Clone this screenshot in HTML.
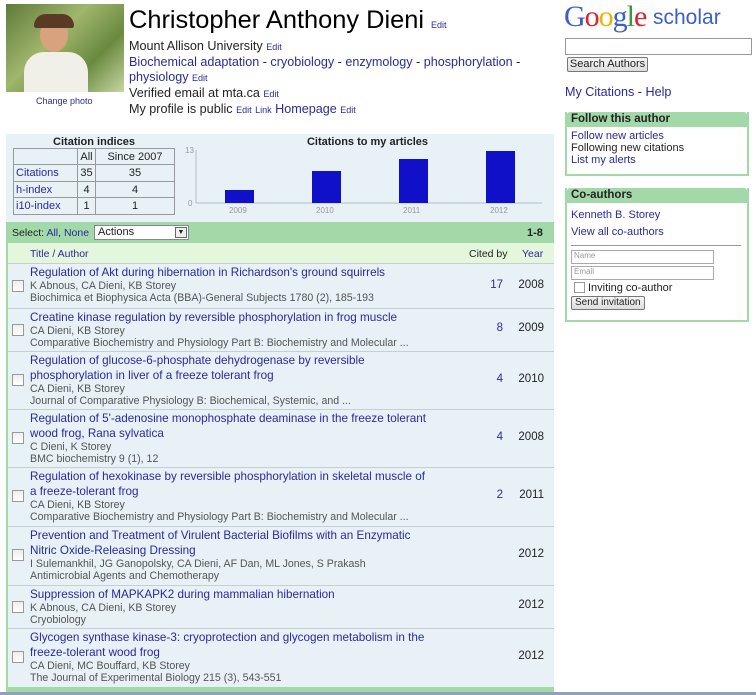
<!DOCTYPE html>
<html><head><meta charset="utf-8"><style>
*{margin:0;padding:0;box-sizing:border-box}
body{width:756px;height:695px;overflow:hidden;background:#fff;font-family:"Liberation Sans",Arial,sans-serif;font-size:12.6px;color:#222;position:relative}
a{color:#2a2a9f;text-decoration:none}
.abs{position:absolute}
.e{font-size:9px;color:#2a2a9f}
.row{position:absolute;left:8px;width:546px;border-top:1px solid #c8cfd4}
.row .cb{position:absolute;left:4px;width:12px;height:12px;border:1px solid #999;background:linear-gradient(#eee,#fff)}
.row .t{position:absolute;left:22px;top:1px;width:430px;font-size:11.7px;line-height:15px;color:#2a2a9f}
.row .s{font-size:10.6px;color:#555;line-height:12px}
.row .c{position:absolute;right:51px;color:#2a2a9f;font-size:11.5px}
.row .y{position:absolute;right:10px;font-size:11.5px}
.box{position:absolute;left:565px;width:184px;border:2px solid #a3d9a8;border-top:none;background:#fff}
.box .h{background:#a3d9a8;font-weight:bold;font-size:11.5px;padding:1px 4px;height:15px;border-radius:3px 3px 0 0}
</style></head><body>
<div class="abs" style="left:6px;top:4px;width:118px;height:88px;background:linear-gradient(135deg,#5f7a3a,#9fb66c 40%,#6a8a3f 70%,#c7d6a3);overflow:hidden">
<div class="abs" style="left:34px;top:14px;width:28px;height:34px;border-radius:50%;background:#d9a27e"></div>
<div class="abs" style="left:28px;top:10px;width:40px;height:14px;border-radius:20px 20px 4px 4px;background:#5a3a25"></div>
<div class="abs" style="left:18px;top:48px;width:64px;height:45px;border-radius:20px 20px 0 0;background:#f0efe8"></div>
</div>
<div class="abs" style="left:36px;top:96px;font-size:9px;color:#2a2a9f">Change photo</div>
<div class="abs" style="left:129px;top:6px;font-size:25.4px;color:#000">Christopher Anthony Dieni <span class="e">Edit</span></div>
<div class="abs" style="left:129px;top:39px;line-height:15px;width:420px">Mount Allison University <span class="e">Edit</span><br>
<a>Biochemical adaptation</a> - <a>cryobiology</a> - <a>enzymology</a> - <a>phosphorylation</a> -<br><a>physiology</a> <span class="e">Edit</span><br>
Verified email at mta.ca <span class="e">Edit</span><br>
My profile is public <span class="e">Edit</span> <span class="e">Link</span> <a>Homepage</a> <span class="e">Edit</span></div>

<div class="abs" style="left:6px;top:134px;width:548px;height:561px;background:#e7f1f6"></div>
<div class="abs" style="left:6px;top:222px;width:2px;height:473px;background:#a3d9a8"></div>
<div class="abs" style="left:13px;top:136px;width:162px;text-align:center;font-weight:bold;font-size:11px">Citation indices</div>
<table class="abs" style="left:13px;top:148px;width:162px;border-collapse:collapse;font-size:11px;background:#e7f1f6">
<tr style="height:16px"><td style="border:1px solid #999;width:64px"></td><td style="border:1px solid #999;text-align:center;width:18px">All</td><td style="border:1px solid #999;text-align:center">Since 2007</td></tr>
<tr style="height:17px"><td style="border:1px solid #999;color:#2a2a9f;padding-left:2px">Citations</td><td style="border:1px solid #999;text-align:center">35</td><td style="border:1px solid #999;text-align:center">35</td></tr>
<tr style="height:16px"><td style="border:1px solid #999;color:#2a2a9f;padding-left:2px">h-index</td><td style="border:1px solid #999;text-align:center">4</td><td style="border:1px solid #999;text-align:center">4</td></tr>
<tr style="height:17px"><td style="border:1px solid #999;color:#2a2a9f;padding-left:2px">i10-index</td><td style="border:1px solid #999;text-align:center">1</td><td style="border:1px solid #999;text-align:center">1</td></tr>
</table>
<div class="abs" style="left:200px;top:136px;width:335px;text-align:center;font-weight:bold;font-size:11px">Citations to my articles</div>
<svg class="abs" style="left:180px;top:140px" width="370" height="80">
<g font-family="Liberation Sans" font-size="8" fill="#999">
<text x="5" y="13">13</text><text x="8" y="66">0</text>
<text x="49" y="73">2009</text><text x="136" y="73">2010</text><text x="223" y="73">2011</text><text x="310" y="73">2012</text></g>
<line x1="16" y1="10" x2="16" y2="63" stroke="#bbb"/>
<line x1="16" y1="63" x2="362" y2="63" stroke="#bbb"/>
<rect x="45" y="50" width="29" height="13" fill="#1010c8"/>
<rect x="132" y="31" width="29" height="32" fill="#1010c8"/>
<rect x="219" y="19" width="29" height="44" fill="#1010c8"/>
<rect x="306" y="11" width="29" height="52" fill="#1010c8"/>
</svg>
<div class="abs" style="left:8px;top:222px;width:546px;height:21px;background:#a3d9a8;font-size:10.5px;padding:5px 4px">Select: <a>All</a>, <a>None</a></div>
<div class="abs" style="left:94px;top:225px;width:95px;height:15px;background:#fff;border:1px solid #888;font-size:11px;padding-left:3px;line-height:13px">Actions<span class="abs" style="right:1px;top:1px;width:12px;height:11px;border:1px solid #666;background:#eee;font-size:7px;text-align:center;line-height:10px">▼</span></div>
<div class="abs" style="left:527px;top:227px;font-size:11px;font-weight:bold">1-8</div>
<div class="abs" style="left:8px;top:243px;width:546px;height:20px;background:#e4f6dc;font-size:10.5px"><span class="abs" style="left:22px;top:5px;color:#2a2a9f">Title / Author</span><span class="abs" style="left:461px;top:5px">Cited by</span><span class="abs" style="left:514px;top:5px;color:#2a2a9f">Year</span></div>

<div class="row" style="top:263px;height:45px"><div class="cb" style="top:16px"></div><div class="t">Regulation of Akt during hibernation in Richardson's ground squirrels<div class="s">K Abnous, CA Dieni, KB Storey<br>Biochimica et Biophysica Acta (BBA)-General Subjects 1780 (2), 185-193</div></div><div class="c" style="top:15px">17</div><div class="y" style="top:15px">2008</div></div>
<div class="row" style="top:308px;height:43px"><div class="cb" style="top:15px"></div><div class="t">Creatine kinase regulation by reversible phosphorylation in frog muscle<div class="s">CA Dieni, KB Storey<br>Comparative Biochemistry and Physiology Part B: Biochemistry and Molecular ...</div></div><div class="c" style="top:13px">8</div><div class="y" style="top:13px">2009</div></div>
<div class="row" style="top:351px;height:58px"><div class="cb" style="top:22px"></div><div class="t">Regulation of glucose-6-phosphate dehydrogenase by reversible<br>phosphorylation in liver of a freeze tolerant frog<div class="s">CA Dieni, KB Storey<br>Journal of Comparative Physiology B: Biochemical, Systemic, and ...</div></div><div class="c" style="top:21px">4</div><div class="y" style="top:21px">2010</div></div>
<div class="row" style="top:409px;height:58px"><div class="cb" style="top:22px"></div><div class="t">Regulation of 5'-adenosine monophosphate deaminase in the freeze tolerant<br>wood frog, Rana sylvatica<div class="s">C Dieni, K Storey<br>BMC biochemistry 9 (1), 12</div></div><div class="c" style="top:21px">4</div><div class="y" style="top:21px">2008</div></div>
<div class="row" style="top:467px;height:59px"><div class="cb" style="top:22px"></div><div class="t">Regulation of hexokinase by reversible phosphorylation in skeletal muscle of<br>a freeze-tolerant frog<div class="s">CA Dieni, KB Storey<br>Comparative Biochemistry and Physiology Part B: Biochemistry and Molecular ...</div></div><div class="c" style="top:21px">2</div><div class="y" style="top:21px">2011</div></div>
<div class="row" style="top:526px;height:59px"><div class="cb" style="top:22px"></div><div class="t">Prevention and Treatment of Virulent Bacterial Biofilms with an Enzymatic<br>Nitric Oxide-Releasing Dressing<div class="s">I Sulemankhil, JG Ganopolsky, CA Dieni, AF Dan, ML Jones, S Prakash<br>Antimicrobial Agents and Chemotherapy</div></div><div class="y" style="top:21px">2012</div></div>
<div class="row" style="top:585px;height:43px"><div class="cb" style="top:15px"></div><div class="t">Suppression of MAPKAPK2 during mammalian hibernation<div class="s">K Abnous, CA Dieni, KB Storey<br>Cryobiology</div></div><div class="y" style="top:13px">2012</div></div>
<div class="row" style="top:628px;height:60px"><div class="cb" style="top:22px"></div><div class="t">Glycogen synthase kinase-3: cryoprotection and glycogen metabolism in the<br>freeze-tolerant wood frog<div class="s">CA Dieni, MC Bouffard, KB Storey<br>The Journal of Experimental Biology 215 (3), 543-551</div></div><div class="y" style="top:21px">2012</div></div>
<div class="abs" style="left:6px;top:687px;width:548px;height:8px;background:#a3d9a8"></div>
<div class="abs" style="left:0;top:692px;width:756px;height:3px;background:#8fa3b8"></div>

<div class="abs" style="left:564px;top:0px;font-family:'Liberation Serif',serif;font-size:30px;letter-spacing:-1px"><span style="color:#3a5fcd">G</span><span style="color:#d23">o</span><span style="color:#e8b600">o</span><span style="color:#3a5fcd">g</span><span style="color:#3a9a3a">l</span><span style="color:#d23">e</span></div>
<div class="abs" style="left:653px;top:6px;font-size:21px;color:#3a5fcd">scholar</div>
<div class="abs" style="left:565px;top:38px;width:187px;height:17px;border:1px solid #999;background:#fff"></div>
<div class="abs" style="left:567px;top:57px;width:81px;height:15px;border:1px solid #777;border-radius:2px;background:linear-gradient(#f6f6f6,#ddd);font-size:11px;text-align:center;line-height:13px">Search Authors</div>
<div class="abs" style="left:565px;top:85px"><a>My Citations</a> - <a>Help</a></div>
<div class="box" style="top:112px;height:64px"><div class="h">Follow this author</div><div style="padding:3px 4px;font-size:11px;line-height:12px"><a>Follow new articles</a><br>Following new citations<br><a>List my alerts</a></div></div>
<div class="box" style="top:188px;height:134px"><div class="h">Co-authors</div><div style="padding:4px 4px;font-size:11px">
<div style="line-height:17px"><a>Kenneth B. Storey</a><br><a>View all co-authors</a></div>
<div style="border-top:1px solid #999;margin:4px 2px 4px 0"></div>
<div style="width:143px;height:14px;border:1px solid #aaa;font-size:8px;color:#999;padding-left:2px;margin-bottom:2px">Name</div>
<div style="width:143px;height:14px;border:1px solid #aaa;font-size:8px;color:#999;padding-left:2px;margin-bottom:2px">Email</div>
<div style="line-height:13px"><span style="display:inline-block;width:11px;height:11px;border:1px solid #999;vertical-align:-2px;margin:0 3px 0 3px"></span>Inviting co-author</div>
<div style="display:inline-block;border:1px solid #777;border-radius:2px;background:linear-gradient(#f6f6f6,#ddd);font-size:10px;padding:0 3px;line-height:12px;margin-top:1px">Send invitation</div>
</div></div>
</body></html>
